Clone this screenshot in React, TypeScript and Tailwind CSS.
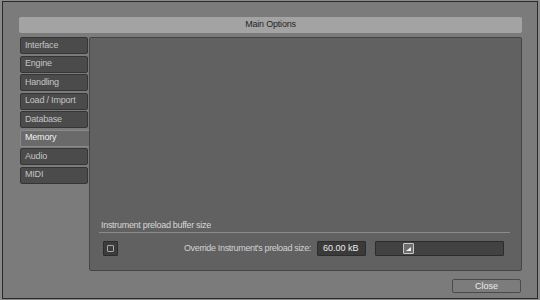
import React from "react"

const tabs = ["Interface", "Engine", "Handling", "Load / Import", "Database", "Memory", "Audio", "MIDI"]

export default function App() {
  const font = { fontFamily: '"Liberation Sans", Arial, sans-serif' }

  return (
    <div className="w-[540px] h-[300px] bg-[#8a8a8a] overflow-hidden" style={font}>
      <div className="ml-[2px] mt-[1px] w-[536px] h-[298px] border border-[#2a2a2a] bg-[#7b7b7b] px-[16px] pt-[15px] flex flex-col">
        {/* title bar */}
        <div className="h-[16px] w-[503px] bg-[#a3a3a3] rounded-[2px] flex items-center justify-center text-[9px] text-[#262626] tracking-[-0.2px]">
          Main Options
        </div>

        <div className="flex mt-[4px] pl-[1px]">
          {/* tabs */}
          <div className="w-[69px] shrink-0 flex flex-col gap-[1.5px]">
            {tabs.map((t) =>
              t === "Memory" ? (
                <div
                  key={t}
                  className="h-[17px] w-[69px] bg-[#6a6a6a] border border-r-0 border-[#8a8a8a] rounded-l-[2px] flex items-center pl-[4px] text-[9px] text-[#f0f0f0] tracking-[-0.2px]"
                >
                  {t}
                </div>
              ) : (
                <div
                  key={t}
                  className="h-[17px] w-[68px] bg-[#4b4b4b] border border-[#353535] rounded-[2px] flex items-center pl-[4px] text-[9px] text-[#c4c4c4] tracking-[-0.2px]"
                >
                  {t}
                </div>
              )
            )}
          </div>

          {/* main panel */}
          <div className="w-[433px] shrink-0 h-[234px] bg-[#616161] border border-[#454545] rounded-[2px] flex flex-col justify-end pl-[9px] pr-[11px] pb-[14px]">
            <div className="text-[9px] text-[#d6d6d6] tracking-[-0.3px] pl-[2px] leading-[12px]">
              Instrument preload buffer size
            </div>
            <div className="h-px bg-[#8c8c8c] mt-[1px] mb-[8px]" />
            <div className="flex items-center h-[15px] mr-[6px]">
              <div className="ml-[4px] w-[15px] h-[15px] bg-[#3c3c3c] border border-[#2c2c2c] rounded-[1px] flex items-center justify-center">
                <div className="w-[7px] h-[7px] border border-[#a8a8a8] rounded-[1px]" />
              </div>
              <div className="flex-1 text-right pr-[6px] text-[9px] text-[#d2d2d2] tracking-[-0.35px]">
                Override Instrument's preload size:
              </div>
              <div className="w-[49px] h-[15px] bg-[#3a3a3a] border border-[#2c2c2c] rounded-[1px] flex items-center pl-[5px] text-[9px] text-[#ececec]">
                60.00 kB
              </div>
              <div className="ml-[9px] w-[129px] h-[15px] bg-[#424242] border border-[#2c2c2c] rounded-[1px] relative">
                <div className="absolute left-[27px] top-[1px] w-[11px] h-[11px] bg-[#6e6e6e] border border-[#c8c8c8] rounded-[1px]">
                  <svg width="9" height="9" viewBox="0 0 9 9" className="block">
                    <polygon points="2,7 7,7 7,3" fill="#f2f2f2" />
                  </svg>
                </div>
              </div>
            </div>
          </div>
        </div>

        {/* footer */}
        <div className="flex justify-end mt-[8px]">
          <button className="w-[69px] h-[14px] bg-[#7c7c7c] border border-[#4a4a4a] rounded-[2px] text-[9px] text-[#ececec] flex items-center justify-center leading-none">
            Close
          </button>
        </div>
      </div>
    </div>
  )
}
